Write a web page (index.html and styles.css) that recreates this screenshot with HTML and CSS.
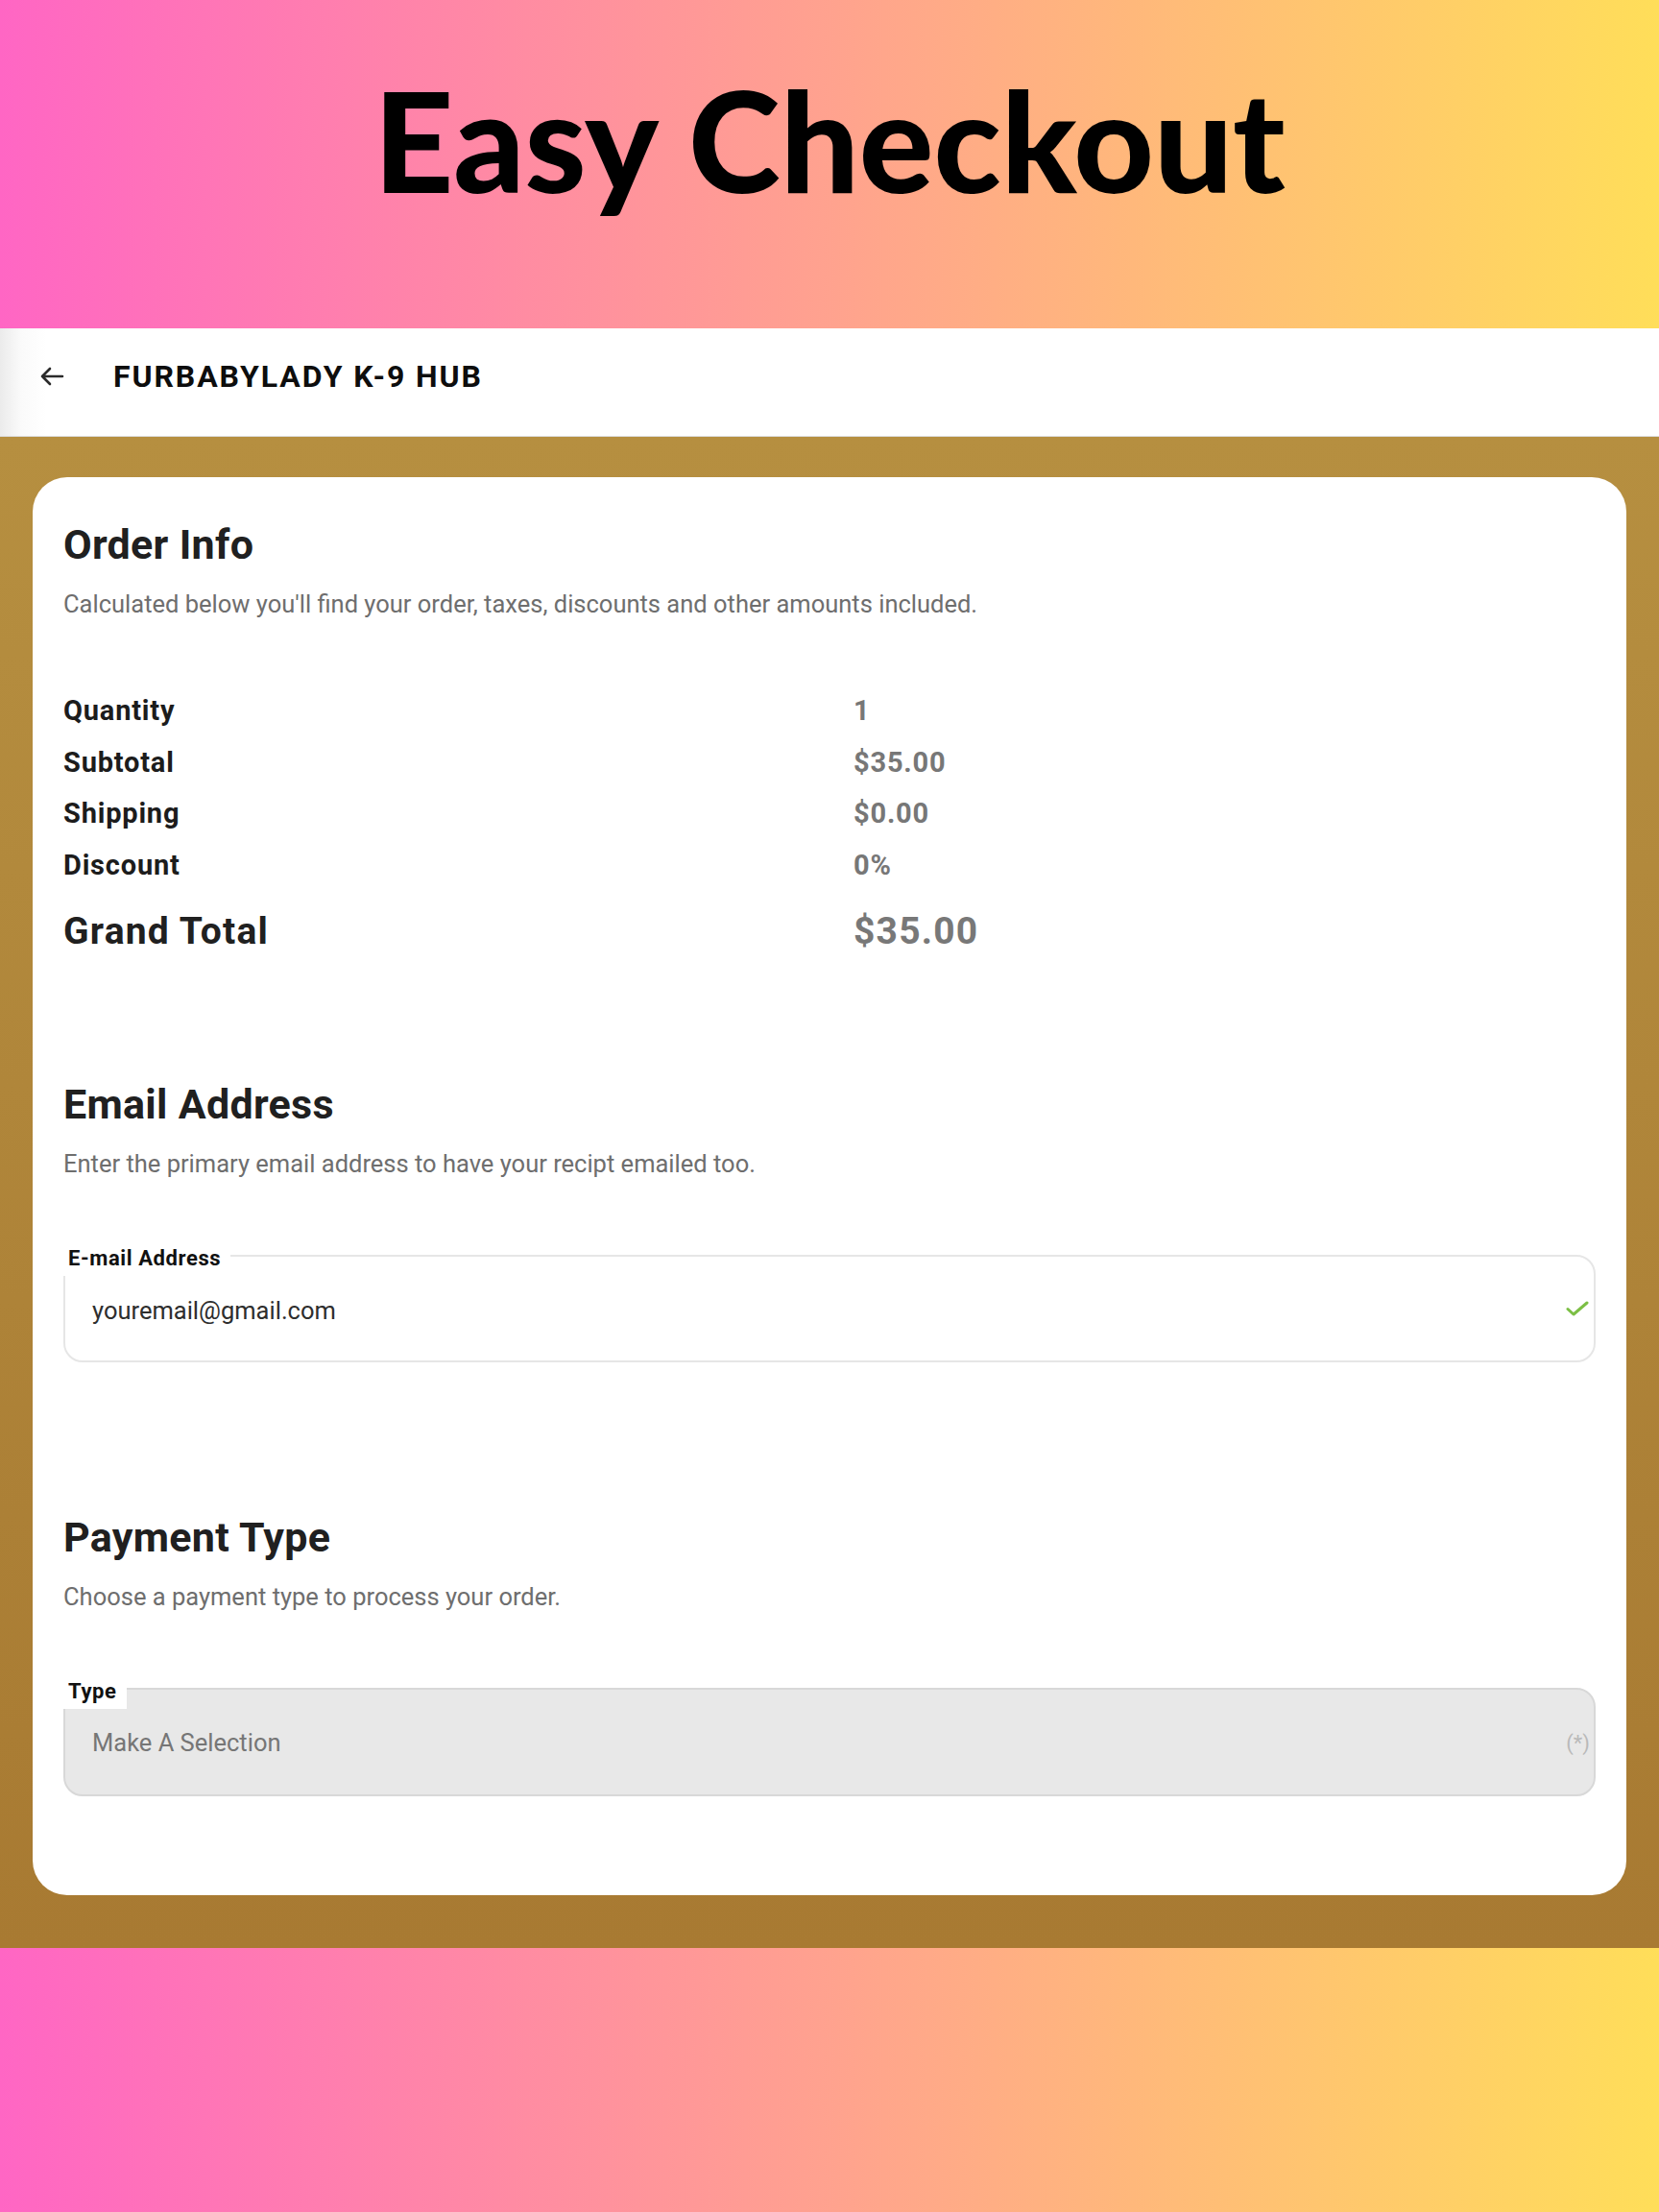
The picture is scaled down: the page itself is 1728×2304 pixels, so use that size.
FILE: index.html
```html
<!DOCTYPE html>
<html lang="en">
<head>
<meta charset="utf-8">
<title>Easy Checkout</title>
<link rel="stylesheet" href="styles.css">
</head>
<body>
<div class="hero"><h1 class="hero-title">Easy Checkout</h1></div>
<header class="topbar">
  <svg class="back" width="26" height="22" viewBox="0 0 26 22" aria-hidden="true">
    <path d="M24 11H3M11 3L3 11L11 19" fill="none" stroke="#2b2b2b" stroke-width="2.6" stroke-linecap="round" stroke-linejoin="round"/>
  </svg>
  <span class="brand">FURBABYLADY K-9 HUB</span>
</header>
<main class="stage">
  <section class="card">
    <div class="block block-order">
      <h2 class="block-title">Order Info</h2>
      <p class="block-sub">Calculated below you'll find your order, taxes, discounts and other amounts included.</p>
      <dl class="summary">
        <div class="row"><dt>Quantity</dt><dd>1</dd></div>
        <div class="row"><dt>Subtotal</dt><dd>$35.00</dd></div>
        <div class="row"><dt>Shipping</dt><dd>$0.00</dd></div>
        <div class="row"><dt>Discount</dt><dd>0%</dd></div>
        <div class="row row-total"><dt>Grand Total</dt><dd>$35.00</dd></div>
      </dl>
    </div>
    <div class="block block-email">
      <h2 class="block-title">Email Address</h2>
      <p class="block-sub">Enter the primary email address to have your recipt emailed too.</p>
      <div class="field">
        <span class="field-label">E-mail Address</span>
        <div class="field-box">
          <span class="field-value">youremail@gmail.com</span>
          <svg class="check" width="24" height="18" viewBox="0 0 24 18" aria-hidden="true">
            <path d="M2 9.5L8 15L22 3" fill="none" stroke="#7cbf45" stroke-width="3" stroke-linecap="round" stroke-linejoin="round"/>
          </svg>
        </div>
      </div>
    </div>
    <div class="block block-pay">
      <h2 class="block-title">Payment Type</h2>
      <p class="block-sub">Choose a payment type to process your order.</p>
      <div class="field">
        <span class="field-label">Type</span>
        <div class="field-box field-select">
          <span class="placeholder">Make A Selection</span>
          <span class="req">(*)</span>
        </div>
      </div>
    </div>
  </section>
</main>
<div class="bottom-band"></div>
</body>
</html>
```

FILE: styles.css
```css
* { box-sizing: border-box; }
html, body { margin: 0; padding: 0; }
body {
  width: 1728px;
  font-family: Roboto, "Liberation Sans", sans-serif;
  background: #fff;
}

.hero {
  height: 342px;
  background: linear-gradient(to right, #ff66c4, #ffde59);
  padding-top: 73px;
}
.hero-title {
  margin: 0;
  text-align: center;
  font-family: Lato, "Open Sans", sans-serif;
  font-weight: 900;
  font-size: 145px;
  line-height: 145px;
  color: #000;
  letter-spacing: 0;
}

.topbar {
  height: 113px;
  display: flex;
  align-items: center;
  padding: 0 0 12px 41px;
  background: linear-gradient(to right, #ebebeb 0, #fafafa 22px, #fff 48px);
  border-bottom: 1px solid #dcdcdc;
}
.back { display: block; margin-right: 51px; }
.brand {
  font-family: Roboto, sans-serif;
  font-weight: 700;
  font-size: 32px;
  line-height: 36px;
  color: #0d0d0d;
  letter-spacing: 1.9px;
}

.stage {
  background: linear-gradient(#b68f40, #a87a32);
  padding: 42px 34px 55px;
}
.card {
  background: #fff;
  border-radius: 36px;
  padding: 45px 32px 103px;
}

.block-title {
  margin: 0;
  font-weight: 700;
  font-size: 43px;
  line-height: 50px;
  color: #202020;
  letter-spacing: 0.3px;
}
.block-sub {
  margin: 22px 0 0;
  font-size: 25.5px;
  line-height: 30px;
  color: #6e6e6e;
}

.summary { margin: 70px 0 0; }
.row {
  display: grid;
  grid-template-columns: 823px 1fr;
  font-size: 29px;
  line-height: 53.6px;
  font-weight: 700;
  letter-spacing: 0.8px;
}
.row dt { color: #1c1c1c; }
.row dd { margin: 0; color: #777; }
.row-total {
  margin-top: 17px;
  font-size: 39px;
  line-height: 50px;
  letter-spacing: 1.2px;
}
.row-total dt { color: #202020; }
.row-total dd { color: #787878; }

.block-email { margin-top: 130px; }
.block-pay { margin-top: 156.5px; }

.field {
  position: relative;
  margin-top: 80px;
}
.field-label {
  position: absolute;
  left: 0;
  top: -15px;
  background: #fff;
  padding: 0 10px 0 5px;
  font-weight: 700;
  font-size: 22px;
  line-height: 37px;
  color: #111;
  letter-spacing: 0.6px;
  z-index: 1;
}
.field-box {
  height: 112px;
  border: 2px solid #e6e6e6;
  border-radius: 20px;
  display: flex;
  align-items: center;
  justify-content: space-between;
  padding: 4px 5px 0 28px;
}
.field-value {
  font-size: 25.5px;
  color: #2e2e2e;
}
.check { display: block; margin-top: -4px; }

.field-select {
  height: 113px;
  background: #e8e8e8;
  border-color: #d8d8d8;
  padding: 2px 4px 0 28px;
}
.placeholder {
  font-size: 25.5px;
  color: #767676;
}
.req {
  font-size: 22px;
  color: #b9b9b9;
}

.bottom-band {
  height: 275px;
  background: linear-gradient(to right, #ff66c4, #ffde59);
}
```
